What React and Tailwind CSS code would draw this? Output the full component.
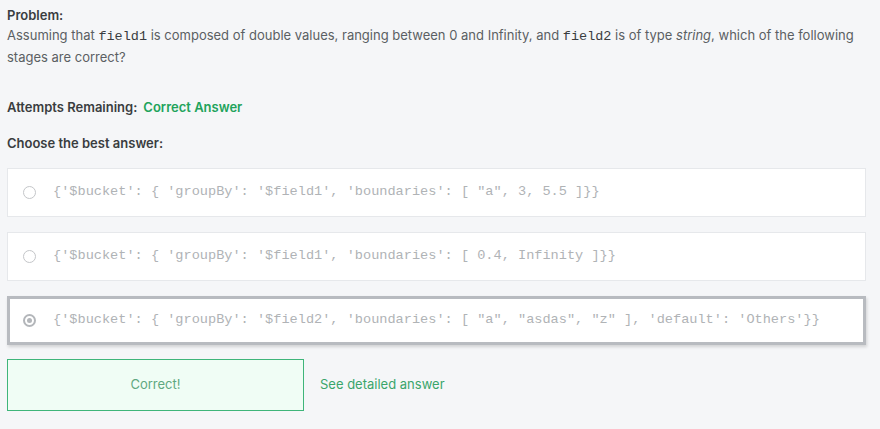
import { useState } from 'react';

const options = [
  `{'$bucket': { 'groupBy': '$field1', 'boundaries': [ "a", 3, 5.5 ]}}`,
  `{'$bucket': { 'groupBy': '$field1', 'boundaries': [ 0.4, Infinity ]}}`,
  `{'$bucket': { 'groupBy': '$field2', 'boundaries': [ "a", "asdas", "z" ], 'default': 'Others'}}`,
];

const Radio = ({ checked }) => (
  <span
    className={`flex h-[13px] w-[13px] shrink-0 items-center justify-center rounded-full ${
      checked ? 'border-2 border-[#b3b6ba]' : 'border border-[#c4c6c9]'
    }`}
  >
    {checked && <span className="h-[5px] w-[5px] rounded-full bg-[#b3b6ba]" />}
  </span>
);

const App = () => {
  const [selected, setSelected] = useState(2);

  return (
    <div className="min-h-[429px] bg-[#f5f6f8] px-[7px] pt-[5px] font-['Inter',sans-serif] text-[13px] text-[#5b5f63]">
      <div className="font-semibold leading-[20px] text-[#3a3d40]">Problem:</div>
      <p className="leading-[21px]">
        Assuming that <code className="font-['Liberation_Mono',monospace] text-[13.5px] text-[#3a3d40]">field1</code> is
        composed of double values, ranging between 0 and Infinity, and{' '}
        <code className="font-['Liberation_Mono',monospace] text-[13.5px] text-[#3a3d40]">field2</code> is of type{' '}
        <em>string</em>, which of the following stages are correct?
      </p>

      <div className="mt-[29px] flex gap-[6px] font-semibold leading-[20px]">
        <span className="text-[#3a3d40]">Attempts Remaining:</span>
        <span className="text-[#21a35b]">Correct Answer</span>
      </div>

      <div className="mt-[16px] font-semibold leading-[20px] text-[#3a3d40]">Choose the best answer:</div>

      <div className="mt-[15px] flex w-[859px] flex-col gap-[15px]">
        {options.map((opt, i) => (
          <button
            key={i}
            onClick={() => setSelected(i)}
            className={`flex h-[49px] items-center gap-[17px] bg-white text-left ${
              selected === i
                ? 'border-[3px] border-[#b8bbc0] pl-[13px] shadow-[1px_2px_3px_rgba(0,0,0,0.15)]'
                : 'border border-[#e6e8eb] pl-[15px]'
            }`}
          >
            <Radio checked={selected === i} />
            <span className="whitespace-nowrap font-['Liberation_Mono',monospace] text-[13.6px] text-[#b0b3b6]">
              {opt}
            </span>
          </button>
        ))}
      </div>

      <div className="mt-[14px] flex items-center gap-[16px]">
        <div className="flex h-[52px] w-[297px] items-center justify-center border border-[#3fb57a] bg-[#f0fdf5] text-[#5fa880]">
          Correct!
        </div>
        <a className="text-[#3aa56b]">See detailed answer</a>
      </div>
    </div>
  );
};

export default App;
